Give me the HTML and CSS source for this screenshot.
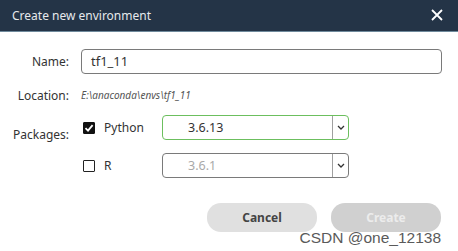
FILE: index.html
```html
<!DOCTYPE html>
<html>
<head lang="en">
    <meta charset="UTF-8">
    <title>Create new environment</title>
    <link rel="stylesheet" href="styles.css">
</head>
<body>
<div class="dialog">
    <div class="titlebar">
        <span class="title">Create new environment</span>
        <svg class="close" width="12" height="12" viewBox="0 0 12 12">
            <path d="M1 1 L11 11 M11 1 L1 11" stroke="#ffffff" stroke-width="1.8" fill="none"/>
        </svg>
    </div>
    <div class="form">
        <label class="label">Name:</label>
        <div class="input">tf1_11</div>

        <label class="label loc-label">Location:</label>
        <div class="path">E:\anaconda\envs\tf1_11</div>

        <label class="label">Packages:</label>
        <div class="pkg">
            <span class="check on">
                <svg width="10" height="10" viewBox="0 0 10 10">
                    <path d="M1.5 5.2 L4 7.6 L8.6 2.2" stroke="#ffffff" stroke-width="1.8" fill="none"/>
                </svg>
            </span>
            <span class="pkg-name">Python</span>
            <div class="select active">
                <span class="value">3.6.13</span>
                <span class="arrow">
                    <svg width="8" height="5" viewBox="0 0 8 5"><path d="M1 1 L4 4 L7 1" stroke="#333" stroke-width="1.3" fill="none"/></svg>
                </span>
            </div>
        </div>

        <span></span>
        <div class="pkg">
            <span class="check"></span>
            <span class="pkg-name">R</span>
            <div class="select">
                <span class="value dim">3.6.1</span>
                <span class="arrow">
                    <svg width="8" height="5" viewBox="0 0 8 5"><path d="M1 1 L4 4 L7 1" stroke="#333" stroke-width="1.3" fill="none"/></svg>
                </span>
            </div>
        </div>
    </div>
    <div class="actions">
        <button class="btn cancel">Cancel</button>
        <button class="btn create">Create</button>
    </div>
    <div class="mark">CSDN @one_12138</div>
</div>
</body>
</html>
```

FILE: styles.css
```css
* {
    margin: 0;
    padding: 0;
    box-sizing: border-box;
}

body {
    width: 458px;
    height: 251px;
    background-color: #ffffff;
    font-family: "Noto Sans", "DejaVu Sans", sans-serif;
    overflow: hidden;
}

.dialog {
    position: relative;
    height: 251px;
}

.titlebar {
    height: 32px;
    background-color: #243447;
    border-bottom: 1px solid #6f8a9c;
    display: flex;
    align-items: center;
    justify-content: space-between;
    padding: 0 15px 1px 12px;
}

.title {
    color: #e6e9ec;
    font-size: 12px;
}

.form {
    display: grid;
    grid-template-columns: 69px 1fr;
    column-gap: 12px;
    padding: 17px 16px 0 0;
    align-items: center;
}

.label {
    text-align: right;
    font-size: 12px;
    color: #333333;
}

.input {
    height: 25px;
    border: 1px solid #7a7a7a;
    border-radius: 4px;
    padding-left: 9px;
    line-height: 23px;
    font-size: 13px;
    color: #333333;
}

.loc-label,
.path {
    height: 41px;
    line-height: 43px;
}

.path {
    font-size: 10px;
    font-style: italic;
    color: #555555;
}

.pkg {
    display: flex;
    align-items: center;
    height: 25px;
    margin-bottom: 13px;
}

.check {
    width: 12px;
    height: 12px;
    margin-left: 2px;
    border: 1.5px solid #222222;
    border-radius: 1px;
    display: flex;
    align-items: center;
    justify-content: center;
}

.check.on {
    background-color: #111111;
    border-color: #111111;
}

.pkg-name {
    margin-left: 9px;
    width: 58px;
    font-size: 12px;
    color: #333333;
}

.select {
    width: 187px;
    height: 25px;
    border: 1px solid #7a7a7a;
    border-radius: 4px;
    display: flex;
}

.select.active {
    border-color: #6cbf5e;
}

.value {
    flex: 1;
    padding-left: 25px;
    line-height: 23px;
    font-size: 12.5px;
    color: #333333;
}

.value.dim {
    color: #a9a9a9;
}

.arrow {
    width: 16px;
    border-left: 1px solid #a0a0a0;
    display: flex;
    align-items: center;
    justify-content: center;
}

.actions {
    display: flex;
    justify-content: flex-end;
    gap: 14px;
    padding: 12px 17px 0 0;
}

.btn {
    width: 110px;
    height: 29px;
    border: none;
    border-radius: 14px;
    font-family: "Noto Sans", "DejaVu Sans", sans-serif;
    font-size: 12px;
    font-weight: bold;
}

.cancel {
    background-color: #e0e0e0;
    color: #444444;
}

.create {
    background-color: #d0d0d0;
    color: #ececec;
}

.mark {
    position: absolute;
    right: 17px;
    top: 229px;
    font-family: "Liberation Sans", sans-serif;
    font-size: 15.5px;
    color: #5a5a5a;
    text-shadow: 0 0 2px #ffffff;
}
```
